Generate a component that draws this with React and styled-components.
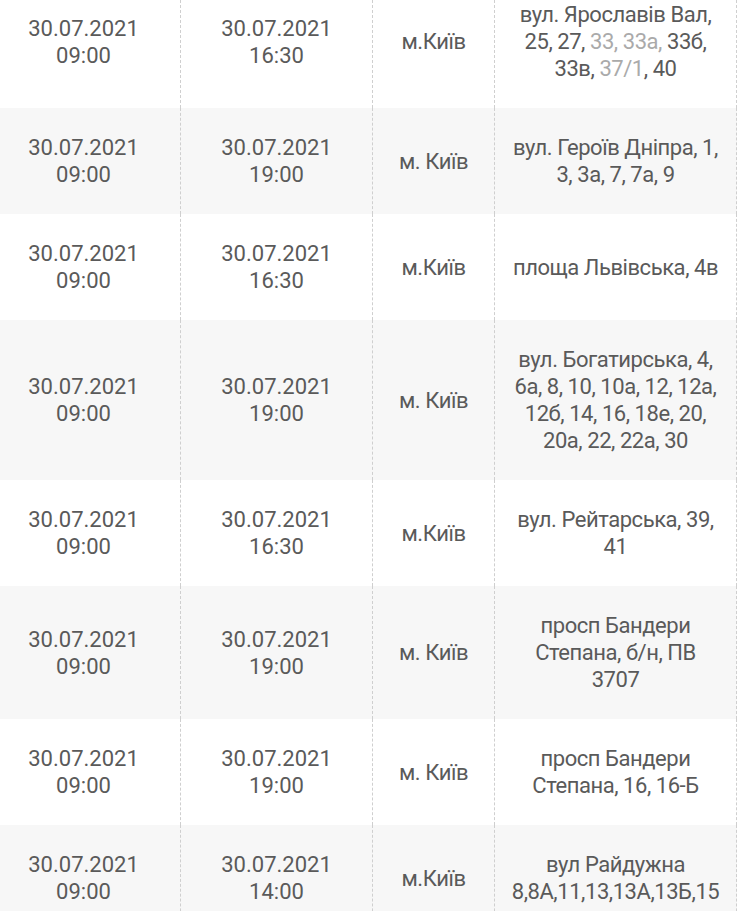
import React from 'react';
import styled, { createGlobalStyle } from 'styled-components';

const GlobalStyle = createGlobalStyle`
  html, body {
    margin: 0;
    padding: 0;
    background: #fff;
    overflow: hidden;
  }
  body {
    font-family: Roboto, "Open Sans", "Liberation Sans", sans-serif;
    color: #5a5a5a;
  }
`;

const Table = styled.table`
  table-layout: fixed;
  width: 750px;
  margin: -25px 0 0 -14px;
  border-collapse: collapse;
  font-size: 22px;
  line-height: 27px;
`;

const Row = styled.tr`
  background: ${(p) => (p.$striped ? '#f7f7f7' : '#fff')};
`;

const Cell = styled.td`
  padding: 26px 8px;
  text-align: center;
  vertical-align: middle;
  border-left: 1px dashed #cfcfcf;
  border-right: 1px dashed #cfcfcf;
  white-space: nowrap;
  letter-spacing: ${(p) => (p.$tight ? '-0.45px' : '0')};
`;

const Faded = styled.span`
  color: #aaa;
`;

const rows = [
  {
    from: ['30.07.2021', '09:00'],
    to: ['30.07.2021', '16:30'],
    city: 'м.Київ',
    address: [
      'вул. Ярославів Вал,',
      <>25, 27, <Faded>33, 33а,</Faded> 33б,</>,
      <>33в, <Faded>37/1</Faded>, 40</>,
    ],
  },
  {
    from: ['30.07.2021', '09:00'],
    to: ['30.07.2021', '19:00'],
    city: 'м. Київ',
    address: ['вул. Героїв Дніпра, 1,', '3, 3а, 7, 7а, 9'],
  },
  {
    from: ['30.07.2021', '09:00'],
    to: ['30.07.2021', '16:30'],
    city: 'м.Київ',
    address: ['площа Львівська, 4в'],
  },
  {
    from: ['30.07.2021', '09:00'],
    to: ['30.07.2021', '19:00'],
    city: 'м. Київ',
    address: [
      'вул. Богатирська, 4,',
      '6а, 8, 10, 10а, 12, 12а,',
      '12б, 14, 16, 18е, 20,',
      '20а, 22, 22а, 30',
    ],
  },
  {
    from: ['30.07.2021', '09:00'],
    to: ['30.07.2021', '16:30'],
    city: 'м.Київ',
    address: ['вул. Рейтарська, 39,', '41'],
  },
  {
    from: ['30.07.2021', '09:00'],
    to: ['30.07.2021', '19:00'],
    city: 'м. Київ',
    address: ['просп Бандери', 'Степана, б/н, ПВ', '3707'],
  },
  {
    from: ['30.07.2021', '09:00'],
    to: ['30.07.2021', '19:00'],
    city: 'м. Київ',
    address: ['просп Бандери', 'Степана, 16, 16-Б'],
  },
  {
    from: ['30.07.2021', '09:00'],
    to: ['30.07.2021', '14:00'],
    city: 'м.Київ',
    address: ['вул Райдужна', '8,8А,11,13,13А,13Б,15'],
  },
];

const Lines = ({ lines }) =>
  lines.map((line, i) => (
    <React.Fragment key={i}>
      {i > 0 && <br />}
      {line}
    </React.Fragment>
  ));

const App = () => {
  return (
    <>
      <GlobalStyle />
      <Table>
        <colgroup>
          <col style={{ width: 194 }} />
          <col style={{ width: 192 }} />
          <col style={{ width: 122 }} />
          <col style={{ width: 242 }} />
        </colgroup>
        <tbody>
          {rows.map((row, i) => (
            <Row key={i} $striped={i % 2 === 1}>
              <Cell><Lines lines={row.from} /></Cell>
              <Cell><Lines lines={row.to} /></Cell>
              <Cell $tight><Lines lines={[row.city]} /></Cell>
              <Cell $tight><Lines lines={row.address} /></Cell>
            </Row>
          ))}
        </tbody>
      </Table>
    </>
  );
};

export default App;
